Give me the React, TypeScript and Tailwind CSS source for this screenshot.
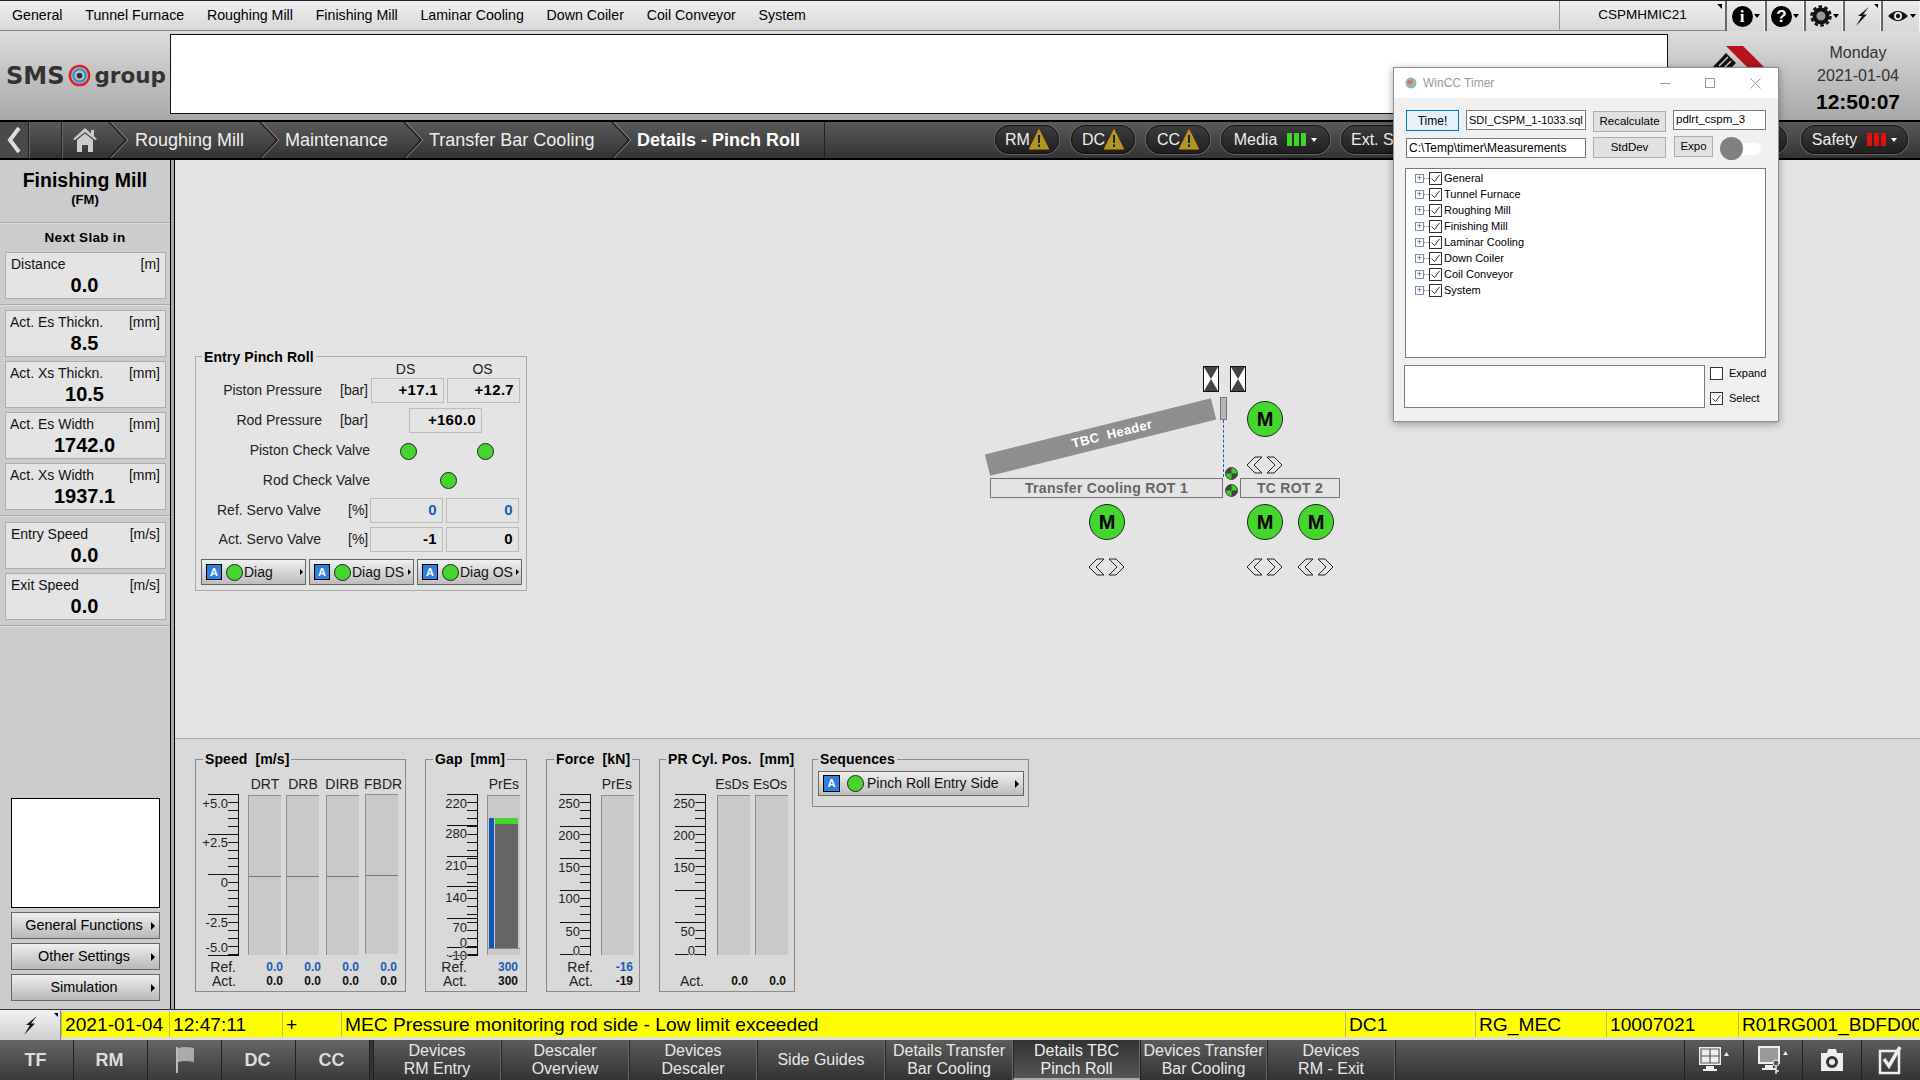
import type { ReactNode } from "react";

const font = "font-['Liberation_Sans',Arial,sans-serif]";

const menuItems = ["General", "Tunnel Furnace", "Roughing Mill", "Finishing Mill", "Laminar Cooling", "Down Coiler", "Coil Conveyor", "System"];
const treeItems = ["General", "Tunnel Furnace", "Roughing Mill", "Finishing Mill", "Laminar Cooling", "Down Coiler", "Coil Conveyor", "System"];

function Chevron() {
  return (
    <svg width="24" height="40" viewBox="0 0 24 40" className="shrink-0">
      <path d="M1 0 L20 20 L1 40" fill="none" stroke="#222" strokeWidth="1.5" />
      <path d="M3 0 L22 20 L3 40" fill="none" stroke="#888" strokeWidth="1" />
    </svg>
  );
}

function TopIcon({ children, w }: { children: ReactNode; w: string }) {
  return (
    <div className={`${w} relative h-[30px] flex items-center justify-center border-l-2 border-[#666] border-r border-r-white/70 bg-gradient-to-b from-[#ececec] to-[#d6d6d6]`}>
      {children}
    </div>
  );
}

function Caret() {
  return <span className="ml-px w-0 h-0 border-x-[3px] border-x-transparent border-t-[4px] border-t-black" />;
}

function Warning() {
  return (
    <svg width="20" height="22" viewBox="0 0 20 22" className="-ml-[5px] shrink-0">
      <path d="M10 1 L19.5 20 L0.5 20 Z" fill="#a89a22" stroke="#dd8a10" strokeWidth="1.2" />
      <rect x="9" y="6" width="2" height="8" fill="#222" />
      <rect x="9" y="15.5" width="2" height="2.5" fill="#222" />
    </svg>
  );
}

function Pill({ label, w, children, ml, left }: { label?: string; w: string; children?: ReactNode; ml: string; left?: boolean }) {
  return (
    <div className={`${w} ${ml} h-[29px] shrink-0 rounded-[14px] border border-[#111] bg-gradient-to-b from-[#3d3d3d] to-[#1f1f1f] flex items-center ${left ? "justify-start pl-[9px]" : "justify-center"} gap-1 text-[16px] leading-none text-[#eee] shadow-[0_0_0_1px_#666]`}>
      {label && <span>{label}</span>}
      {children}
    </div>
  );
}

function Bars({ color }: { color: string }) {
  return (
    <span className="flex gap-[2px] ml-[6px] items-center">
      <span className={`w-[5px] h-[13px] ${color}`} />
      <span className={`w-[5px] h-[13px] ${color}`} />
      <span className={`w-[5px] h-[13px] ${color}`} />
      <span className="ml-[3px] w-0 h-0 border-x-[3px] border-x-transparent border-t-[4px] border-t-white" />
    </span>
  );
}

function InfoCard({ label, unit, value, inset }: { label: string; unit: string; value: string; inset?: boolean }) {
  return (
    <div className="mx-[5px] h-[47px] w-[161px] border border-[#adadad] bg-[#e4e4e4] px-[5px] text-[14px] leading-none text-black">
      <div className="flex justify-between pt-[4px] text-[#111]">
        <span className={inset ? "" : "-ml-px"}>{label}</span>
        <span>{unit}</span>
      </div>
      <div className="text-center font-bold text-[20px] leading-none mt-[4px] pr-[2px]">{value}</div>
    </div>
  );
}

function SideButton({ label }: { label: string }) {
  return (
    <div className="relative h-[27px] w-[149px] ml-[11px] border-[1px] border-[#666] bg-gradient-to-b from-[#f0f0f0] to-[#b8b8b8] flex items-center justify-center text-[14.4px] text-black pr-[3px]">
      {label}
      <span className="absolute right-[4px] w-0 h-0 border-y-[4px] border-y-transparent border-l-[4px] border-l-black" />
    </div>
  );
}

function Divider() {
  return <div className="h-[2px] w-full bg-[#aaa] border-b border-[#ddd]" />;
}

function ValueBox({ value, blue }: { value: string; blue?: boolean }) {
  return (
    <div className={`w-[73px] h-[25px] border border-[#bbb] flex items-center justify-end pr-[5px] font-bold text-[15px] tracking-[0.3px] ${blue ? "text-[#1a5cb8]" : "text-black"}`}>
      {value}
    </div>
  );
}

function Led() {
  return <span className="w-[17px] h-[17px] shrink-0 rounded-full bg-[#44d62c] border border-[#222] block" />;
}

function ABadge({ big }: { big?: boolean }) {
  return (
    <span className={`${big ? "w-[17px] h-[17px]" : "w-[16px] h-[16px]"} shrink-0 bg-[#2d7fe0] border border-black flex items-center justify-center text-white font-bold text-[11px] leading-none`}>
      A
    </span>
  );
}

function DiagButton({ label, w }: { label: string; w: string }) {
  return (
    <div className={`${w} relative h-[26px] border border-[#666] bg-gradient-to-b from-[#f0f0f0] to-[#bdbdbd] flex items-center pl-[4px] gap-[4px] text-[14px] text-[#111]`}>
      <ABadge />
      <Led />
      <span className="-ml-[3px]">{label}</span>
      <span className="absolute right-[2px] w-0 h-0 border-y-[3px] border-y-transparent border-l-[3px] border-l-black" />
    </div>
  );
}

function Arrows({ cls }: { cls: string }) {
  return (
    <svg className={`absolute ${cls}`} width="38" height="18" viewBox="0 0 38 18">
      <path d="M1 9 L9 1 L16 1 L8 9 L16 17 L9 17 Z" fill="none" stroke="#222" strokeWidth="1" />
      <path d="M21 1 L28 1 L36 9 L28 17 L21 17 L29 9 Z" fill="none" stroke="#222" strokeWidth="1" />
    </svg>
  );
}

function Motor({ cls }: { cls: string }) {
  return (
    <div className={`absolute ${cls} w-[36px] h-[36px] rounded-full bg-[#44d62c] border border-[#222] flex items-center justify-center font-bold text-[20px] leading-none text-black`}>
      M
    </div>
  );
}

function Valve({ cls }: { cls: string }) {
  return (
    <svg className={`absolute ${cls}`} width="16" height="26" viewBox="0 0 16 26">
      <rect x="0.5" y="0.5" width="15" height="25" fill="#fff" stroke="#111" />
      <path d="M1 1 L15 1 L8 13 Z M1 25 L15 25 L8 13 Z" fill="#444" />
    </svg>
  );
}

function SmallLed({ cls }: { cls: string }) {
  return (
    <svg className={`absolute ${cls}`} width="13" height="13" viewBox="0 0 13 13">
      <circle cx="6.5" cy="6.5" r="6" fill="#3fcf2c" stroke="#222" strokeWidth="0.8" />
      <path d="M6.5 6.5 L6.5 0.5 A6 6 0 0 0 0.5 6.5 Z M6.5 6.5 L6.5 12.5 A6 6 0 0 0 12.5 6.5 Z" fill="#444" />
    </svg>
  );
}

function Fieldset({ title, w, h, children, ml, titleLeft = "left-[7px]" }: { title: string; w: string; h: string; children: ReactNode; ml?: string; titleLeft?: string }) {
  return (
    <div className={`relative shrink-0 ${w} ${h} ${ml ?? ""} border border-[#8a8a8a]`}>
      <span className={`absolute -top-[10px] ${titleLeft} bg-[#d9d9d9] px-[2px] font-bold text-[14px] leading-[18px] tracking-[0.1px] whitespace-pre text-black`}>{title}</span>
      {children}
    </div>
  );
}

type Tick = { y: number; major: boolean };

function buildTicks(majors: number[]): Tick[] {
  const out: Tick[] = [];
  for (let y = 1; y <= 162; y += 8) out.push({ y, major: false });
  majors.forEach((m) => out.push({ y: m, major: true }));
  return out;
}

function Scale({ ticks, labels }: { ticks: Tick[]; labels: { y: number; t: string }[] }) {
  return (
    <svg width="44" height="165" viewBox="0 0 44 165" className="shrink-0 overflow-visible">
      <line x1="42.5" y1="1" x2="42.5" y2="163" stroke="#111" />
      {ticks.map((tick, i) => (
        <line key={i} x1={tick.major ? 12 : 32} y1={tick.y + 0.5} x2="43" y2={tick.y + 0.5} stroke="#111" />
      ))}
      {labels.map((l) => (
        <text key={l.t} x="32" y={l.y} textAnchor="end" fontSize="13" fontFamily="Liberation Sans" fill="#222" paintOrder="stroke" stroke="#d9d9d9" strokeWidth="1.5">
          {l.t}
        </text>
      ))}
    </svg>
  );
}

function Bar({ mid, children }: { mid?: string; children?: ReactNode }) {
  return (
    <div className="relative w-[33px] h-[160px] bg-[#c9c9c9] border-l border-t border-[#8f8f8f]">
      {mid && <div className={`absolute left-0 right-0 ${mid} h-px bg-[#777]`} />}
      {children}
    </div>
  );
}

function RefAct({ refs, acts, labelW, gapCls }: { refs: string[]; acts: string[]; labelW: string; gapCls: string }) {
  const row = (label: string, vals: string[], cls: string) => (
    <div className="flex items-center h-[14px]">
      <span className={`${labelW} text-right text-[14px] leading-none text-[#222]`}>{label}</span>
      <div className={`flex ${gapCls}`}>
        {vals.map((v, i) => (
          <span key={i} className={`w-[33px] text-right font-bold text-[12px] leading-none ${cls}`}>{v}</span>
        ))}
      </div>
    </div>
  );
  return (
    <div className="mt-[2px]">
      {refs.length > 0 ? row("Ref.", refs, "text-[#1a5cb8]") : <div className="h-[14px]" />}
      {row("Act.", acts, "text-[#111]")}
    </div>
  );
}

const speedTicks = buildTicks([1, 41, 81, 121, 162]);
const gapTicks = buildTicks([1, 32, 63, 93, 125, 154, 162]);
const forceTicks = buildTicks([1, 33, 65, 97, 129, 161]);

function Check() {
  return (
    <span className="w-[13px] h-[13px] shrink-0 bg-white border border-[#333] flex items-center justify-center">
      <svg width="11" height="11" viewBox="0 0 11 11"><path d="M1.5 5.5 L4.5 8.5 L9.5 2" fill="none" stroke="#333" strokeWidth="1" /></svg>
    </span>
  );
}

function FormBtn({ label, cls }: { label: string; cls: string }) {
  return <div className={`${cls} shrink-0 bg-[#e1e1e1] border border-[#adadad] flex items-center justify-center text-[11.5px] text-black`}>{label}</div>;
}

function Input({ value, cls }: { value: string; cls: string }) {
  return <div className={`${cls} shrink-0 h-[20px] bg-white border border-[#7a7a7a] flex items-center pl-[2px] text-black overflow-hidden whitespace-nowrap`}>{value}</div>;
}

function WinCCTimer() {
  return (
    <div className="absolute left-[1393px] top-[67px] w-[386px] h-[355px] bg-[#f0f0f0] border border-[#8f8f8f] shadow-[0_2px_8px_rgba(0,0,0,0.35)] z-10">
      <div className="h-[30px] bg-white flex items-center pl-[10px]">
        <svg width="14" height="14" viewBox="0 0 14 14" className="mr-[5px]">
          <circle cx="7" cy="7" r="5.5" fill="#8fb8ae" />
          <path d="M3 5 Q7 2 9 6 Q7 9 4 8 Z" fill="#c77a6a" />
        </svg>
        <span className="text-[12px] text-[#999]">WinCC Timer</span>
        <span className="ml-auto mr-[35px] w-[10px] h-px bg-[#999]" />
        <span className="mr-[35px] w-[10px] h-[10px] border border-[#999]" />
        <svg width="11" height="11" viewBox="0 0 11 11" className="mr-[17px]"><path d="M0.5 0.5 L10.5 10.5 M10.5 0.5 L0.5 10.5" stroke="#999" /></svg>
      </div>
      <div className="pl-[12px] pr-[12px] pt-[12px]">
        <div className="flex items-start h-[28px]">
          <div className="shrink-0 w-[53px] h-[21px] bg-[#e5f1fb] border border-[#0078d7] flex items-center justify-center text-[12px] text-black">Time!</div>
          <Input value="SDI_CSPM_1-1033.sql" cls="ml-[7px] w-[120px] text-[11px]" />
          <FormBtn label="Recalculate" cls="ml-[7px] mt-px w-[73px] h-[21px]" />
          <Input value="pdlrt_cspm_3" cls="ml-[7px] w-[93px] text-[11.5px]" />
        </div>
        <div className="flex items-start h-[30px] relative">
          <Input value="C:\Temp\timer\Measurements" cls="w-[180px] text-[12px]" />
          <FormBtn label="StdDev" cls="ml-[7px] -mt-px w-[73px] h-[21px]" />
          <FormBtn label="Expo" cls="ml-[8px] -mt-[2px] w-[39px] h-[21px]" />
          <div className="shrink-0 ml-[7px] -mt-[1px] w-[41px] h-[23px] flex items-center relative">
            <div className="absolute left-[6px] right-0 h-[12px] rounded-full bg-white" />
            <div className="relative w-[23px] h-[23px] rounded-full bg-[#808080]" />
          </div>
        </div>
        <div className="w-[361px] h-[190px] -ml-[1px] bg-white border border-[#7a7a7a] pt-px pl-[9px]">
          {treeItems.map((t) => (
            <div key={t} className="h-[16px] flex items-center text-[11px] text-black">
              <span className="w-[9px] h-[9px] border border-[#7a8aa8] flex items-center justify-center text-[#2a4a8a] text-[9px] leading-none">+</span>
              <span className="w-[5px] border-t border-dotted border-[#888]" />
              <Check />
              <span className="ml-[2px]">{t}</span>
            </div>
          ))}
        </div>
        <div className="flex mt-[7px] -ml-[2px]">
          <div className="shrink-0 w-[301px] h-[43px] bg-white border border-[#7a7a7a]" />
          <div className="ml-[5px] pt-[2px] text-[11px] text-black">
            <div className="flex items-center h-[13px]">
              <span className="w-[13px] h-[13px] bg-white border border-[#333]" />
              <span className="ml-[6px]">Expand</span>
            </div>
            <div className="flex items-center h-[13px] mt-[12px]">
              <Check />
              <span className="ml-[6px]">Select</span>
            </div>
          </div>
        </div>
      </div>
    </div>
  );
}

function NavBtn({ lines, w, active }: { lines: string[]; w: string; active?: boolean }) {
  return (
    <div className={`${w} shrink-0 h-[40px] flex flex-col items-center justify-center text-[16px] leading-[18px] border-l border-[#222] border-r border-r-[#6a6a6a] ${active ? "bg-gradient-to-b from-[#333] to-[#555] border-b-2 border-b-[#aaa] text-[#eee] pt-[2px]" : "bg-gradient-to-b from-[#5c5c5c] to-[#333] text-[#e8e8e8]"}`}>
      {lines.map((l) => <span key={l} className="whitespace-nowrap">{l}</span>)}
    </div>
  );
}

function IconBtn({ children }: { children: ReactNode }) {
  return (
    <div className="w-[59px] h-[40px] shrink-0 flex items-center justify-center border-l border-[#222] bg-gradient-to-b from-[#5c5c5c] to-[#333]">
      {children}
    </div>
  );
}

function AlarmCell({ w, children }: { w: string; children?: ReactNode }) {
  return <div className={`${w} shrink-0 h-full flex items-center pl-[3px] border-l border-[#bdbd60] overflow-hidden whitespace-nowrap`}>{children}</div>;
}

export default function App() {
  return (
    <div className={`${font} relative w-[1920px] h-[1080px] overflow-hidden bg-[#e4e4e4] flex flex-col`}>
      {/* top menu */}
      <div className="h-[31px] shrink-0 border-t border-[#222] border-b border-b-[#888] bg-gradient-to-b from-[#f0f0f0] to-[#d8d8d8] flex items-center pl-[12px] text-[14.2px] text-black">
        <div className="flex gap-[22.8px]">
          {menuItems.map((m) => <span key={m}>{m}</span>)}
        </div>
        <div className="ml-auto flex h-full">
          <div className="relative w-[166px] h-full border-l border-[#999] flex items-center justify-center text-[13.5px]">
            CSPMHMIC21
            <span className="absolute right-[3px] top-[3px] w-0 h-0 border-l-[5px] border-l-transparent border-t-[5px] border-t-black" />
          </div>
          <TopIcon w="w-[40px]">
            <span className="w-[21px] h-[21px] rounded-full bg-black text-white font-bold text-[17px] font-['Liberation_Serif'] flex items-center justify-center leading-none">i</span>
            <Caret />
          </TopIcon>
          <TopIcon w="w-[39px]">
            <span className="w-[21px] h-[21px] rounded-full bg-black text-white font-bold text-[17px] flex items-center justify-center leading-none">?</span>
            <Caret />
          </TopIcon>
          <TopIcon w="w-[39px]">
            <svg width="22" height="22" viewBox="0 0 22 22">
              <circle cx="11" cy="11" r="6.5" fill="#999" stroke="#111" strokeWidth="4" />
              <circle cx="11" cy="11" r="9.5" fill="none" stroke="#111" strokeWidth="2.5" strokeDasharray="3.5 2.5" />
            </svg>
            <Caret />
          </TopIcon>
          <TopIcon w="w-[38px]">
            <svg width="15" height="19" viewBox="0 0 15 19"><path d="M14 0 L3 9 L7 9 L1 19 L12 7.5 L8 7.5 Z" fill="#111" /></svg>
            <span className="absolute right-[2px] top-[3px] w-0 h-0 border-l-[4px] border-l-transparent border-t-[4px] border-t-black" />
          </TopIcon>
          <TopIcon w="w-[39px]">
            <svg width="22" height="14" viewBox="0 0 22 14">
              <path d="M1 7 Q11 -3 21 7 Q11 17 1 7 Z" fill="#111" />
              <circle cx="11" cy="7" r="4" fill="#eee" />
              <circle cx="11" cy="7" r="2.2" fill="#111" />
            </svg>
            <Caret />
          </TopIcon>
        </div>
      </div>

      {/* header */}
      <div className="h-[89px] shrink-0 bg-gradient-to-b from-[#dcdcdc] to-[#a8a8a8] flex items-center">
        <div className="w-[170px] shrink-0 flex items-center pl-[6px] text-[#333] font-bold leading-none font-['DejaVu_Sans',sans-serif]">
          <span className="text-[24px]">SMS</span>
          <svg width="23" height="23" viewBox="0 0 24 24" className="ml-[4px] mr-[3px] shrink-0">
            <circle cx="12" cy="12" r="10" fill="none" stroke="#d8232a" strokeWidth="2.6" />
            <circle cx="12" cy="12" r="6.4" fill="none" stroke="#2d8fd0" strokeWidth="2.4" />
            <circle cx="12" cy="12" r="3" fill="#333" />
          </svg>
          <span className="text-[21.5px]">group</span>
        </div>
        <div className="w-[1498px] h-[80px] mt-[-3px] bg-white border border-[#111] shrink-0" />
        <div className="flex-1 relative h-full">
          <svg width="80" height="24" viewBox="0 0 80 24" className="absolute left-[32px] top-[15px]">
            <path d="M26 0 L43 0 L67 24 L50 24 Z" fill="#b8121a" />
            <path d="M10 24 L26 7 L36 17 L29 24 Z" fill="#111" />
            <path d="M19 20 L28 11 M23 23 L31 15" stroke="#ccc" strokeWidth="1.5" />
          </svg>
        </div>
        <div className="absolute right-[17px] top-[41px] w-[90px] text-center text-[16px] leading-[23px] text-[#333]">
          <div>Monday</div>
          <div>2021-01-04</div>
          <div className="font-bold text-[21px] leading-[30px] text-black">12:50:07</div>
        </div>
      </div>

      {/* breadcrumb bar */}
      <div className="h-[40px] shrink-0 border-y-2 border-black bg-gradient-to-b from-[#5a5a5a] to-[#343434] flex items-center text-[18px] text-[#eee] overflow-hidden">
        <div className="w-[29px] h-full flex items-center justify-center bg-[#4a4a4a] border-r border-[#222]">
          <svg width="16" height="28" viewBox="0 0 16 28"><path d="M13 2 L4 14 L13 26" fill="none" stroke="#ddd" strokeWidth="4" /></svg>
        </div>
        <div className="w-[33px] h-full border-r border-[#222] border-l border-l-[#666]" />
        <div className="w-[44px] h-full flex items-center justify-center border-l border-[#666] shrink-0">
          <svg width="26" height="26" viewBox="0 0 26 26">
            <path d="M13 1 L25 12 L23 13 L13 5 L3 13 L1 12 Z M19 3 h3 v6 l-3 -2 Z" fill="#ccc" />
            <path d="M5 13 L13 6.5 L21 13 V25 H16 V18 H10 V25 H5 Z" fill="#ccc" />
          </svg>
        </div>
        <Chevron />
        <span className="ml-[5px] w-[122px] shrink-0">Roughing Mill</span>
        <Chevron />
        <span className="ml-[4px] w-[116px] shrink-0">Maintenance</span>
        <Chevron />
        <span className="ml-[4px] w-[180px] shrink-0">Transfer Bar Cooling</span>
        <Chevron />
        <span className="ml-[4px] w-[187px] shrink-0 font-bold text-white whitespace-nowrap">Details - Pinch Roll</span>
        <div className="h-full w-px bg-[#222]" />
        <div className="flex items-center absolute left-[995px] top-[125px]">
          <Pill label="RM" w="w-[64px]" ml=""><Warning /></Pill>
          <Pill label="DC" w="w-[64px]" ml="ml-[12px]"><Warning /></Pill>
          <Pill label="CC" w="w-[64px]" ml="ml-[11px]"><Warning /></Pill>
          <Pill label="Media" w="w-[109px]" ml="ml-[11px]"><Bars color="bg-[#3fd62a]" /></Pill>
          <Pill label="Ext. S" w="w-[120px]" ml="ml-[11px]" left />
          <Pill w="w-[315px]" ml="ml-[11px]" />
          <Pill label="Safety" w="w-[107px]" ml="ml-[14px]"><Bars color="bg-[#e01010]" /></Pill>
        </div>
      </div>

      {/* body */}
      <div className="flex-1 flex min-h-0">
        {/* sidebar */}
        <div className="w-[170px] shrink-0 bg-[#cccccc] flex flex-col">
          <div className="h-[62px] text-center font-bold text-black pt-[9px] leading-none">
            <div className="text-[19.5px] leading-[23px]">Finishing Mill</div>
            <div className="text-[13px] leading-[16px]">(FM)</div>
          </div>
          <Divider />
          <div className="text-center font-bold text-[13.5px] leading-[28px] h-[28px] text-black tracking-[0.3px]">Next Slab in</div>
          <InfoCard label="Distance" unit="[m]" value="0.0" inset />
          <div className="mt-[5px] mb-[4px]"><Divider /></div>
          <div className="flex flex-col gap-[4px]">
            <InfoCard label="Act. Es Thickn." unit="[mm]" value="8.5" />
            <InfoCard label="Act. Xs Thickn." unit="[mm]" value="10.5" />
            <InfoCard label="Act. Es Width" unit="[mm]" value="1742.0" />
            <InfoCard label="Act. Xs Width" unit="[mm]" value="1937.1" />
          </div>
          <div className="mt-[5px] mb-[5px]"><Divider /></div>
          <div className="flex flex-col gap-[4px]">
            <InfoCard label="Entry Speed" unit="[m/s]" value="0.0" inset />
            <InfoCard label="Exit Speed" unit="[m/s]" value="0.0" inset />
          </div>
          <div className="mt-[5px]"><Divider /></div>
          <div className="mt-auto mb-[8px] flex flex-col gap-[4px]">
            <div className="w-[149px] h-[110px] ml-[11px] bg-white border border-black" />
            <SideButton label="General Functions" />
            <SideButton label="Other Settings" />
            <SideButton label="Simulation" />
          </div>
        </div>
        <div className="w-[5px] shrink-0 bg-[#aaa] border-x border-black" />

        {/* main */}
        <div className="flex-1 min-w-0 flex flex-col">
          <div className="h-[578px] shrink-0 bg-[#e4e4e4] relative pt-[196px]">
            <div className="relative ml-[20px] w-[332px] h-[235px] border border-[#aaa] text-[14px] text-[#222]">
              <span className="absolute -top-[9px] left-[6px] bg-[#e4e4e4] px-[2px] font-bold text-[14px] leading-[18px] tracking-[0.1px] text-black">Entry Pinch Roll</span>
              <div className="flex h-[19px] items-end leading-none pl-[171px]">
                <span className="w-[77px] text-center">DS</span>
                <span className="w-[77px] text-center">OS</span>
              </div>
              <div className="flex h-[25px] items-center mt-[2px]">
                <span className="w-[126px] text-right">Piston Pressure</span>
                <span className="ml-[18px] w-[30px]">[bar]</span>
                <span className="ml-[1px]"><ValueBox value="+17.1" /></span>
                <span className="ml-[3px]"><ValueBox value="+12.7" /></span>
              </div>
              <div className="flex h-[25px] items-center mt-[5px]">
                <span className="w-[126px] text-right">Rod Pressure</span>
                <span className="ml-[18px] w-[30px]">[bar]</span>
                <span className="ml-[39px]"><ValueBox value="+160.0" /></span>
              </div>
              <div className="flex h-[25px] items-center mt-[5px]">
                <span className="w-[174px] text-right">Piston Check Valve</span>
                <span className="ml-[30px] mt-[2px]"><Led /></span>
                <span className="ml-[60px] mt-[2px]"><Led /></span>
              </div>
              <div className="flex h-[25px] items-center mt-[5px]">
                <span className="w-[174px] text-right">Rod Check Valve</span>
                <span className="ml-[70px]"><Led /></span>
              </div>
              <div className="flex h-[25px] items-center mt-[5px]">
                <span className="w-[125px] text-right">Ref. Servo Valve</span>
                <span className="ml-[27px] w-[20px]">[%]</span>
                <span className="ml-[2px]"><ValueBox value="0" blue /></span>
                <span className="ml-[3px]"><ValueBox value="0" blue /></span>
              </div>
              <div className="flex h-[25px] items-center mt-[4px]">
                <span className="w-[125px] text-right">Act. Servo Valve</span>
                <span className="ml-[27px] w-[20px]">[%]</span>
                <span className="ml-[2px]"><ValueBox value="-1" /></span>
                <span className="ml-[3px]"><ValueBox value="0" /></span>
              </div>
              <div className="flex mt-[7px] ml-[5px] gap-[3px]">
                <DiagButton label="Diag" w="w-[105px]" />
                <DiagButton label="Diag DS" w="w-[105px]" />
                <DiagButton label="Diag OS" w="w-[105px]" />
              </div>
            </div>

            {/* plant diagram */}
            <div className="absolute left-0 top-0 w-full h-full pointer-events-none">
              <Valve cls="left-[1028px] top-[206px]" />
              <Valve cls="left-[1055px] top-[206px]" />
              <div className="absolute left-[1045px] top-[237px] w-[7px] h-[23px] bg-[#b5b5b5] border border-[#777]" />
              <div className="absolute left-[1048px] top-[260px] h-[57px] border-l border-dashed border-[#1a5cb8]" />
              <div className="absolute left-[809px] top-[266px] w-[233px] h-[22px] bg-[#8e8e8e] -rotate-[14deg] flex items-center justify-center pl-[24px] font-bold text-[13px] text-white tracking-[0.4px] whitespace-pre">TBC  Header</div>
              <Motor cls="left-[1072px] top-[241px]" />
              <Arrows cls="left-[1071px] top-[296px]" />
              <SmallLed cls="left-[1050px] top-[307px]" />
              <SmallLed cls="left-[1050px] top-[324px]" />
              <div className="absolute left-[815px] top-[318px] w-[233px] h-[20px] border border-[#777] flex items-center justify-center font-bold text-[14px] text-[#666] tracking-[0.3px]">Transfer Cooling ROT 1</div>
              <div className="absolute left-[1065px] top-[318px] w-[100px] h-[20px] border border-[#777] flex items-center justify-center font-bold text-[14px] text-[#666] tracking-[0.3px]">TC ROT 2</div>
              <Motor cls="left-[914px] top-[344px]" />
              <Motor cls="left-[1072px] top-[344px]" />
              <Motor cls="left-[1123px] top-[344px]" />
              <Arrows cls="left-[913px] top-[398px]" />
              <Arrows cls="left-[1071px] top-[398px]" />
              <Arrows cls="left-[1122px] top-[398px]" />
            </div>
          </div>

          {/* trend panels */}
          <div className="flex-1 bg-[#d9d9d9] border-t border-[#aaa] flex items-start pl-[20px] pt-[20px] text-[14px]">
            <Fieldset title="Speed  [m/s]" w="w-[211px]" h="h-[233px]">
              <div className="flex flex-col pt-[17px]">
                <div className="flex pl-[43px] h-[16px] text-[14px] leading-none text-[#222] text-center">
                  <span className="w-[48px] pl-[4px]">DRT</span>
                  <span className="w-[34px] ml-[-1px]">DRB</span>
                  <span className="w-[44px]">DIRB</span>
                  <span className="w-[36px]">FBDR</span>
                </div>
                <div className="flex">
                  <Scale
                    ticks={speedTicks}
                    labels={[{ y: 15, t: "+5.0" }, { y: 54, t: "+2.5" }, { y: 94, t: "0" }, { y: 134, t: "-2.5" }, { y: 159, t: "-5.0" }]}
                  />
                  <div className="flex gap-[5px] ml-[8px] pt-[2px]">
                    <Bar mid="top-[80px]" />
                    <Bar mid="top-[80px]" />
                    <div className="ml-[2px]"><Bar mid="top-[80px]" /></div>
                    <div className="ml-[1px] -mt-px"><Bar mid="top-[80px]" /></div>
                  </div>
                </div>
                <RefAct labelW="w-[40px]" gapCls="gap-[5px] ml-[14px]" refs={["0.0", "0.0", "0.0", "0.0"]} acts={["0.0", "0.0", "0.0", "0.0"]} />
              </div>
            </Fieldset>
            <Fieldset title="Gap  [mm]" w="w-[102px]" h="h-[233px]" ml="ml-[19px]">
              <div className="flex flex-col pt-[17px]">
                <div className="h-[16px] text-right pr-[7px] leading-none text-[#222]">PrEs</div>
                <div className="flex">
                  <div className="ml-[9px]">
                    <Scale
                      ticks={gapTicks}
                      labels={[{ y: 15, t: "220" }, { y: 45, t: "280" }, { y: 77, t: "210" }, { y: 109, t: "140" }, { y: 139, t: "70" }, { y: 154, t: "0" }, { y: 167, t: "-10" }]}
                    />
                  </div>
                  <div className="ml-[8px] mt-[2px]">
                    <Bar>
                      <div className="absolute left-[1px] top-[22px] w-[5px] h-[130px] bg-[#0f58b8]" />
                      <div className="absolute left-[7px] right-[2px] top-[22px] h-[6px] bg-[#44d62c]" />
                      <div className="absolute left-[7px] right-[2px] top-[28px] h-[124px] bg-[#666]" />
                      <div className="absolute left-0 right-0 top-[152px] h-px bg-[#888]" />
                    </Bar>
                  </div>
                </div>
                <RefAct labelW="w-[41px]" gapCls="ml-[18px]" refs={["300"]} acts={["300"]} />
              </div>
            </Fieldset>
            <Fieldset title="Force  [kN]" w="w-[94px]" h="h-[233px]" ml="ml-[19px]">
              <div className="flex flex-col pt-[17px]">
                <div className="h-[16px] text-right pr-[7px] leading-none text-[#222]">PrEs</div>
                <div className="flex">
                  <div className="ml-[1px]">
                    <Scale
                      ticks={forceTicks}
                      labels={[{ y: 15, t: "250" }, { y: 47, t: "200" }, { y: 79, t: "150" }, { y: 110, t: "100" }, { y: 143, t: "50" }, { y: 162, t: "0" }]}
                    />
                  </div>
                  <div className="ml-[9px] mt-[2px]"><Bar /></div>
                </div>
                <RefAct labelW="w-[46px]" gapCls="ml-[7px]" refs={["-16"]} acts={["-19"]} />
              </div>
            </Fieldset>
            <Fieldset title="PR Cyl. Pos.  [mm]" w="w-[136px]" h="h-[233px]" ml="ml-[19px]" titleLeft="left-[6px]">
              <div className="flex flex-col pt-[17px]">
                <div className="flex h-[16px] leading-none text-[#222] pl-[53px] text-center">
                  <span className="w-[38px]">EsDs</span>
                  <span className="w-[38px]">EsOs</span>
                </div>
                <div className="flex">
                  <div className="ml-[3px]">
                    <Scale
                      ticks={forceTicks}
                      labels={[{ y: 15, t: "250" }, { y: 47, t: "200" }, { y: 79, t: "150" }, { y: 143, t: "50" }, { y: 162, t: "0" }]}
                    />
                  </div>
                  <div className="flex gap-[5px] ml-[10px] mt-[2px]">
                    <Bar />
                    <Bar />
                  </div>
                </div>
                <RefAct labelW="w-[44px]" gapCls="gap-[5px] ml-[11px]" refs={[]} acts={["0.0", "0.0"]} />
              </div>
            </Fieldset>
            <Fieldset title="Sequences" w="w-[217px]" h="h-[48px]" ml="ml-[17px]" titleLeft="left-[5px]">
              <div className="relative ml-[5px] mt-[11px] w-[206px] h-[25px] border border-[#666] bg-gradient-to-b from-[#f0f0f0] to-[#bdbdbd] flex items-center pl-[4px] gap-[7px] text-[14px] text-[#111]">
                <ABadge big />
                <Led />
                <span className="-ml-[4px]">Pinch Roll Entry Side</span>
                <span className="absolute right-[4px] w-0 h-0 border-y-[4px] border-y-transparent border-l-[4px] border-l-black" />
              </div>
            </Fieldset>
          </div>
        </div>
      </div>

      {/* alarm line */}
      <div className="h-[31px] shrink-0 border-t border-[#333] bg-[#e0e0e0] flex text-[19.2px] text-black leading-none">
        <div className="relative w-[61px] shrink-0 h-full flex items-center justify-center border-r border-[#888] bg-gradient-to-b from-[#f2f2f2] to-[#cfcfcf]">
          <svg width="15" height="19" viewBox="0 0 15 19"><path d="M14 0 L3 9 L7 9 L1 19 L12 7.5 L8 7.5 Z" fill="#111" /></svg>
          <span className="absolute right-[2px] top-[3px] w-0 h-0 border-l-[4px] border-l-transparent border-t-[4px] border-t-black" />
        </div>
        <div className="flex-1 mt-[2px] mb-[3px] flex bg-[#ffff00] overflow-hidden">
          <AlarmCell w="w-[108px]">2021-01-04</AlarmCell>
          <AlarmCell w="w-[113px]">12:47:11</AlarmCell>
          <AlarmCell w="w-[59px]">+</AlarmCell>
          <AlarmCell w="w-[1004px]">MEC Pressure monitoring rod side - Low limit exceeded</AlarmCell>
          <AlarmCell w="w-[130px]">DC1</AlarmCell>
          <AlarmCell w="w-[131px]">RG_MEC</AlarmCell>
          <AlarmCell w="w-[132px]">10007021</AlarmCell>
          <AlarmCell w="w-[181px]">R01RG001_BDFD001</AlarmCell>
        </div>
      </div>

      {/* bottom nav */}
      <div className="h-[40px] shrink-0 flex bg-gradient-to-b from-[#5c5c5c] to-[#333] font-normal">
        {["TF", "RM"].map((t) => (
          <div key={t} className="w-[74px] h-[40px] shrink-0 flex items-center justify-center pr-[2px] font-bold text-[18px] text-[#ddd] border-r border-[#222] bg-gradient-to-b from-[#666] to-[#3a3a3a]">{t}</div>
        ))}
        <div className="w-[74px] h-[40px] shrink-0 flex items-center justify-center border-r border-[#222] bg-gradient-to-b from-[#666] to-[#3a3a3a]">
          <svg width="22" height="28" viewBox="0 0 22 28">
            <line x1="3" y1="1" x2="3" y2="27" stroke="#bbb" strokeWidth="2" />
            <path d="M4 2 Q12 0 20 2 V16 Q12 14 4 16 Z" fill="#aaa" />
          </svg>
        </div>
        {["DC", "CC"].map((t) => (
          <div key={t} className="w-[74px] h-[40px] shrink-0 flex items-center justify-center pr-[2px] font-bold text-[18px] text-[#ddd] border-r border-[#222] bg-gradient-to-b from-[#666] to-[#3a3a3a]">{t}</div>
        ))}
        <div className="w-[3px] shrink-0 bg-[#333]" />
        <NavBtn lines={["Devices", "RM Entry"]} w="w-[128px]" />
        <NavBtn lines={["Descaler", "Overview"]} w="w-[128px]" />
        <NavBtn lines={["Devices", "Descaler"]} w="w-[128px]" />
        <NavBtn lines={["Side Guides"]} w="w-[128px]" />
        <NavBtn lines={["Details Transfer", "Bar Cooling"]} w="w-[128px]" />
        <NavBtn lines={["Details TBC", "Pinch Roll"]} w="w-[127px]" active />
        <NavBtn lines={["Devices Transfer", "Bar Cooling"]} w="w-[127px]" />
        <NavBtn lines={["Devices", "RM - Exit"]} w="w-[128px]" />
        <div className="flex-1 border-l border-[#222]" />
        <IconBtn>
          <svg width="32" height="28" viewBox="0 0 32 28">
            <rect x="1" y="1" width="22" height="18" fill="#eee" />
            <path d="M3 10 H21 M12 3 V17 M3 3 H21 V17 H3 Z" fill="none" stroke="#555" strokeWidth="1.2" />
            <rect x="8" y="20" width="8" height="3" fill="#eee" />
            <rect x="5" y="23" width="14" height="2" fill="#eee" />
            <path d="M26 10 L31 10 L28.5 6 Z" fill="#eee" />
          </svg>
        </IconBtn>
        <IconBtn>
          <svg width="32" height="30" viewBox="0 0 32 30">
            <rect x="1" y="1" width="22" height="18" fill="#eee" />
            <rect x="3" y="3" width="18" height="14" fill="#999" />
            <rect x="8" y="20" width="8" height="3" fill="#eee" />
            <rect x="5" y="23" width="14" height="2" fill="#eee" />
            <circle cx="19" cy="18" r="3" fill="#555" stroke="#eee" />
            <path d="M19 21 V29 M19 26 H22" stroke="#eee" strokeWidth="1.5" />
            <path d="M26 10 L31 10 L28.5 6 Z" fill="#eee" />
          </svg>
        </IconBtn>
        <IconBtn>
          <svg width="26" height="24" viewBox="0 0 26 24">
            <path d="M2 5 H8 L9 1 H17 L18 5 H24 V23 H2 Z" fill="#eee" />
            <circle cx="13" cy="14" r="6" fill="#333" />
            <circle cx="13" cy="14" r="3" fill="#eee" />
          </svg>
        </IconBtn>
        <IconBtn>
          <svg width="26" height="30" viewBox="0 0 26 30">
            <rect x="2" y="6" width="19" height="22" fill="none" stroke="#eee" strokeWidth="2.5" />
            <path d="M6 14 L11 21 L22 2" fill="none" stroke="#eee" strokeWidth="3.5" />
          </svg>
        </IconBtn>
      </div>

      <WinCCTimer />
    </div>
  );
}
